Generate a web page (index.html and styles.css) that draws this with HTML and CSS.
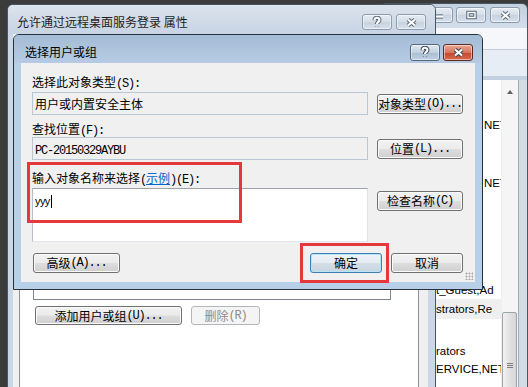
FILE: index.html
```html
<!DOCTYPE html>
<html>
	<head>
		<meta charset="utf-8">
		<title>选择用户或组</title>
		<link rel="stylesheet" href="styles.css">
	</head>
	<body>
		<div class="desk">
			<!-- window behind, on the right -->
			<div class="win win-back">
				<div class="cap cap-back">
					<span class="cbtn cbtn-min">
						<svg class="g g-min" viewBox="0 0 12 10"><path class="o" d="M2 6.5H10"/><path class="i" d="M2 6.5H10"/></svg>
					</span>
					<span class="cbtn cbtn-max">
						<svg class="g g-max" viewBox="0 0 13 10"><rect class="o" x="3" y="2.5" width="7" height="5"/><rect class="i" x="3" y="2.5" width="7" height="5"/></svg>
					</span>
					<span class="cbtn cbtn-close">
						<svg class="g g-x" viewBox="0 0 13 11"><path class="o" d="M3 2.5L10 8.5M10 2.5L3 8.5"/><path class="i" d="M3 2.5L10 8.5M10 2.5L3 8.5"/></svg>
					</span>
				</div>
				<div class="menu"></div>
				<div class="tools"></div>
				<div class="listwrap">
					<div class="rows">
						<div class="gap gap-36"></div>
						<div class="row row-far">NET</div>
						<div class="gap gap-40"></div>
						<div class="row row-far">NET</div>
						<div class="gap gap-89"></div>
						<div class="row">t_Guest,Ad</div>
						<div class="row row-sel">strators,Re</div>
						<div class="gap gap-23"></div>
						<div class="row">rators</div>
						<div class="row">ERVICE,NET</div>
					</div>
					<div class="vscroll">
						<div class="arrow"><span class="tri"></span></div>
						<div class="thumb"><span class="thumb-grip"></span></div>
					</div>
					<div class="back-edge"></div>
				</div>
			</div>

			<!-- properties dialog -->
			<div class="win win-prop">
				<div class="cap cap-prop">
					<span class="cap-title">允许通过远程桌面服务登录 属性</span>
					<span class="cbtn">
						<svg class="g g-q" viewBox="0 0 10 13"><path class="o" d="M2.6 4.2C2.6 1 7.4 1 7.4 4C7.4 5.9 5 5.9 5 8M5 10.6V10.9"/><path class="i" d="M2.6 4.2C2.6 1 7.4 1 7.4 4C7.4 5.9 5 5.9 5 8M5 10.6V10.9"/></svg>
					</span>
					<span class="cbtn">
						<svg class="g g-x" viewBox="0 0 13 11"><path class="o" d="M3 2.5L10 8.5M10 2.5L3 8.5"/><path class="i" d="M3 2.5L10 8.5M10 2.5L3 8.5"/></svg>
					</span>
				</div>
				<div class="prop-body">
					<div class="prop-client">
						<div class="tabpage">
							<div class="lbox"></div>
							<div class="prop-btns">
								<button class="btn btn-add">添加用户或组<span class="a">(U)...</span></button>
								<button class="btn btn-del" disabled>删除<span class="a">(R)</span></button>
							</div>
						</div>
					</div>
				</div>
			</div>

			<!-- select users or groups -->
			<div class="win win-dlg">
				<div class="cap cap-dlg">
					<span class="cap-title">选择用户或组</span>
					<span class="cbtn cbtn-help">
						<svg class="g g-q" viewBox="0 0 10 13"><path class="o" d="M2.6 4.2C2.6 1 7.4 1 7.4 4C7.4 5.9 5 5.9 5 8M5 10.6V10.9"/><path class="i" d="M2.6 4.2C2.6 1 7.4 1 7.4 4C7.4 5.9 5 5.9 5 8M5 10.6V10.9"/></svg>
					</span>
					<span class="cbtn cbtn-red">
						<svg class="g g-x" viewBox="0 0 13 11"><path class="o" d="M3 2.5L10 8.5M10 2.5L3 8.5"/><path class="i" d="M3 2.5L10 8.5M10 2.5L3 8.5"/></svg>
					</span>
				</div>
				<div class="dlg-body">
					<div class="dlg-client">
						<div class="lbl">选择此对象类型<span class="a">(S):</span></div>
						<div class="line">
							<div class="edit ro">用户或内置安全主体</div>
							<button class="btn side">对象类型<span class="a">(O)...</span></button>
						</div>
						<div class="lbl lbl-2">查找位置<span class="a">(F):</span></div>
						<div class="line line-2">
							<div class="edit ro"><span class="a">PC-20150329AYBU</span></div>
							<button class="btn side">位置<span class="a">(L)...</span></button>
						</div>
						<div class="lbl lbl-3">输入对象名称来选择<span class="a">(</span><span class="link">示例</span><span class="a">)(E):</span></div>
						<div class="line line-top">
							<div class="edit multi"><span class="typed">yyy</span><span class="caret"></span></div>
							<button class="btn side check">检查名称<span class="a">(C)</span></button>
						</div>
						<div class="foot">
							<button class="btn adv">高级<span class="a">(A)...</span></button>
							<div class="foot-r">
								<button class="btn ok default">确定</button>
								<button class="btn ok">取消</button>
							</div>
						</div>
						<span class="grip"></span>
					</div>
				</div>
			</div>

			<div class="mark mark-a"></div>
			<div class="mark mark-b"></div>
		</div>
	</body>
</html>
```

FILE: styles.css
```css
* {
	margin: 0;
	padding: 0;
	box-sizing: border-box;
}

body {
	background: #3a3a3a;
	font-family: "Noto Sans CJK SC", sans-serif;
	font-size: 12px;
	color: #000;
}

.desk {
	position: relative;
	width: 528px;
	height: 387px;
	overflow: hidden;
	background: #3b3b3b;
}

.a {
	font-family: "Liberation Mono", monospace;
	letter-spacing: -1.2px;
}

/* windows */
.win {
	position: absolute;
	display: flex;
	flex-direction: column;
	border: 1px solid #4b5562;
	border-radius: 6px 6px 0 0;
}

.cap {
	display: flex;
	align-items: flex-start;
	flex-shrink: 0;
}

.cap-title {
	flex: 1;
	line-height: 16px;
	white-space: nowrap;
}

.cbtn {
	display: flex;
	align-items: center;
	justify-content: center;
	width: 30px;
	height: 16px;
	border: 1px solid #8b9bb0;
	border-radius: 3px;
	background: linear-gradient(#e6ecf3, #d4dde8 50%, #c7d2df 50%, #d7e0eb);
	box-shadow: inset 0 0 0 1px rgba(255, 255, 255, .5);
}

.g {
	fill: none;
}

.g .o {
	stroke: #5b6879;
	stroke-width: 4.2;
}

.g .i {
	stroke: #fff;
	stroke-width: 2.2;
}

.g-x {
	width: 13px;
	height: 11px;
}

.g-q {
	width: 10px;
	height: 13px;
}

.g-min {
	width: 12px;
	height: 10px;
}

.g-max {
	width: 13px;
	height: 10px;
}

.g-max .o {
	stroke-width: 3.4;
}

.g-max .i {
	stroke-width: 1.4;
}

/* back window */
.win-back {
	left: 380px;
	top: 3px;
	width: 148px;
	height: 400px;
	background: linear-gradient(#c3d0df, #d3deea 25px);
}

.cap-back {
	height: 24px;
	padding: 3px 7px 0 0;
	justify-content: flex-end;
	gap: 3px;
}

.cbtn-min {
	width: 28px;
}

.cbtn-close {
	margin-left: 1px;
}

.menu {
	height: 22px;
	background: #f5f7fa;
	border-bottom: 1px solid #c3cdd9;
}

.tools {
	height: 30px;
	background: #e7edf4;
	border-bottom: 4px solid #c2d0e0;
}

.listwrap {
	flex: 1;
	display: flex;
	background: #fff;
}

.rows {
	width: 120px;
	overflow: hidden;
	padding-left: 55px;
	font-family: "Liberation Sans", sans-serif;
	font-size: 11.5px;
}

.gap-36 { height: 36px; }
.gap-40 { height: 40px; }
.gap-89 { height: 89px; }
.gap-23 { height: 23px; }

.row {
	height: 18px;
	line-height: 18px;
	white-space: nowrap;
}

.row-far {
	padding-left: 48px;
}

.row-sel {
	height: 20px;
	line-height: 20px;
	margin-left: -55px;
	padding-left: 55px;
	background: #efefef;
}

.vscroll {
	width: 17px;
	background: #f5f5f5;
	border-left: 1px solid #efefef;
}

.arrow {
	display: flex;
	justify-content: center;
	padding-top: 10px;
	height: 17px;
}

.tri {
	width: 0;
	height: 0;
	border-left: 3.5px solid transparent;
	border-right: 3.5px solid transparent;
	border-bottom: 4px solid #606060;
}

.thumb {
	margin: 215px 1px 0 0;
	height: 90px;
	border: 1px solid #9ba3ad;
	border-radius: 2px;
	background: linear-gradient(90deg, #f2f2f2, #e2e2e2 50%, #d6d6d6);
	padding-top: 50px;
}

.thumb-grip {
	display: block;
	width: 6px;
	height: 5px;
	margin: 0 auto;
	border-top: 1px solid #7d7d7d;
	border-bottom: 1px solid #7d7d7d;
	background: linear-gradient(#7d7d7d, #7d7d7d) center / 100% 1px no-repeat;
}

.back-edge {
	width: 9px;
	background: #d3dbe5;
	border-left: 1px solid #a2abb6;
}

/* properties dialog */
.win-prop {
	left: 7px;
	top: 4px;
	width: 429px;
	height: 400px;
	background: #c9d7e7;
}

.cap-prop {
	height: 29px;
	padding: 9px 9px 0 9px;
	gap: 4px;
	background: linear-gradient(#dbe3ed, #c7d4e3);
	border-radius: 5px 5px 0 0;
	color: #1e1e1e;
}

.prop-body {
	flex: 1;
	display: flex;
	padding: 0 7px 0 5px;
}

.prop-client {
	flex: 1;
	display: flex;
	background: #f0f0f0;
	padding: 0 9px 0 6px;
}

.tabpage {
	flex: 1;
	background: #fff;
	border-left: 1px solid #8d9098;
	border-right: 1px solid #8d9098;
}

.lbox {
	margin: 40px 0 0 13px;
	width: 358px;
	height: 226px;
	border: 1px solid #828790;
}

.prop-btns {
	display: flex;
	gap: 9px;
	margin: 6px 0 0 15px;
}

/* buttons */
.btn {
	display: flex;
	align-items: center;
	justify-content: center;
	height: 20px;
	border: 1px solid #707070;
	border-radius: 3px;
	background: linear-gradient(#f2f2f2, #ebebeb 48%, #dddddd 52%, #cfcfcf);
	box-shadow: inset 0 0 0 1px #fbfbfb;
	font-family: inherit;
	font-size: 12px;
	line-height: 14px;
	color: #000;
	white-space: nowrap;
}

.btn-add {
	width: 147px;
	height: 19px;
}

.btn-del {
	width: 69px;
	height: 19px;
	border-color: #b3b7ba;
	background: #f4f4f4;
	box-shadow: none;
	color: #8c8c8c;
}

/* select dialog */
.win-dlg {
	left: 13px;
	top: 34px;
	width: 470px;
	height: 256px;
	border-color: #28323d;
	background: #b8cfe8;
}

.cap-dlg {
	height: 28px;
	padding: 9px 9px 0 11px;
	gap: 3px;
	background: linear-gradient(#a5bcd6, #b6cbe3);
	border-radius: 5px 5px 0 0;
}

.cap-dlg .cbtn {
	height: 17px;
}

.cbtn-help {
	border-color: #56687e;
	background: linear-gradient(#dfe8f1, #c2d1e0 50%, #a9bdd2 50%, #bfd0e2);
}

.cbtn-red {
	border-color: #5e2a22;
	background: linear-gradient(#e9a795, #d7765d 50%, #c3462d 50%, #d66b4e);
}

.cbtn-help .o,
.cbtn-red .o {
	stroke: #3a4552;
}

.dlg-body {
	flex: 1;
	padding: 0 7px 7px 7px;
}

.dlg-client {
	position: relative;
	height: 219px;
	background: #f0f0f0;
	padding: 12px 12px 0 11px;
}

.lbl {
	height: 14px;
	line-height: 14px;
	white-space: nowrap;
}

.lbl-2 {
	margin-top: 7px;
}

.lbl-3 {
	margin-top: 11px;
}

.link {
	color: #0066cc;
	text-decoration: underline;
}

.line {
	display: flex;
	align-items: center;
	gap: 9px;
	margin-top: 3px;
}

.line-2 {
	margin-top: 1px;
}

.line-top {
	align-items: flex-start;
}

.edit {
	width: 336px;
	height: 23px;
	border: 1px solid #b9c6d4;
	padding-left: 2px;
	line-height: 21px;
	white-space: nowrap;
}

.ro {
	background: #f0f0f0;
}

.multi {
	height: 54px;
	background: #fff;
	border-color: #9ea3a9 #dde2e8 #e2e6eb #b9bec5;
	padding-top: 6px;
	line-height: 13px;
	display: flex;
	align-items: flex-start;
}

.typed {
	font-family: "Liberation Sans", sans-serif;
	font-size: 11px;
	letter-spacing: -0.6px;
}

.caret {
	width: 1px;
	height: 13px;
	background: #000;
	margin-left: 1px;
}

.side {
	width: 86px;
}

.check {
	margin-top: 3px;
}

.foot {
	display: flex;
	justify-content: space-between;
	margin-top: 11px;
}

.adv {
	width: 87px;
	margin-left: 1px;
}

.foot-r {
	display: flex;
	gap: 9px;
}

.ok {
	width: 72px;
}

.default {
	border-color: #3c7fb1;
	background: linear-gradient(#eef3f7, #e4ebf1 48%, #d4dee7 52%, #c7d4df);
	box-shadow: inset 0 0 0 1px #b8e4f8;
}

.grip {
	position: absolute;
	right: 2px;
	bottom: 2px;
	width: 8px;
	height: 8px;
	background: radial-gradient(circle, #a7a7a7 0.8px, transparent 1.2px) 0 0 / 3px 3px;
}

/* annotation frames */
.mark {
	position: absolute;
	border: 3px solid #e5383d;
}

.mark-a {
	left: 27px;
	top: 162px;
	width: 215px;
	height: 61px;
}

.mark-b {
	left: 300px;
	top: 243px;
	width: 89px;
	height: 40px;
}
```
